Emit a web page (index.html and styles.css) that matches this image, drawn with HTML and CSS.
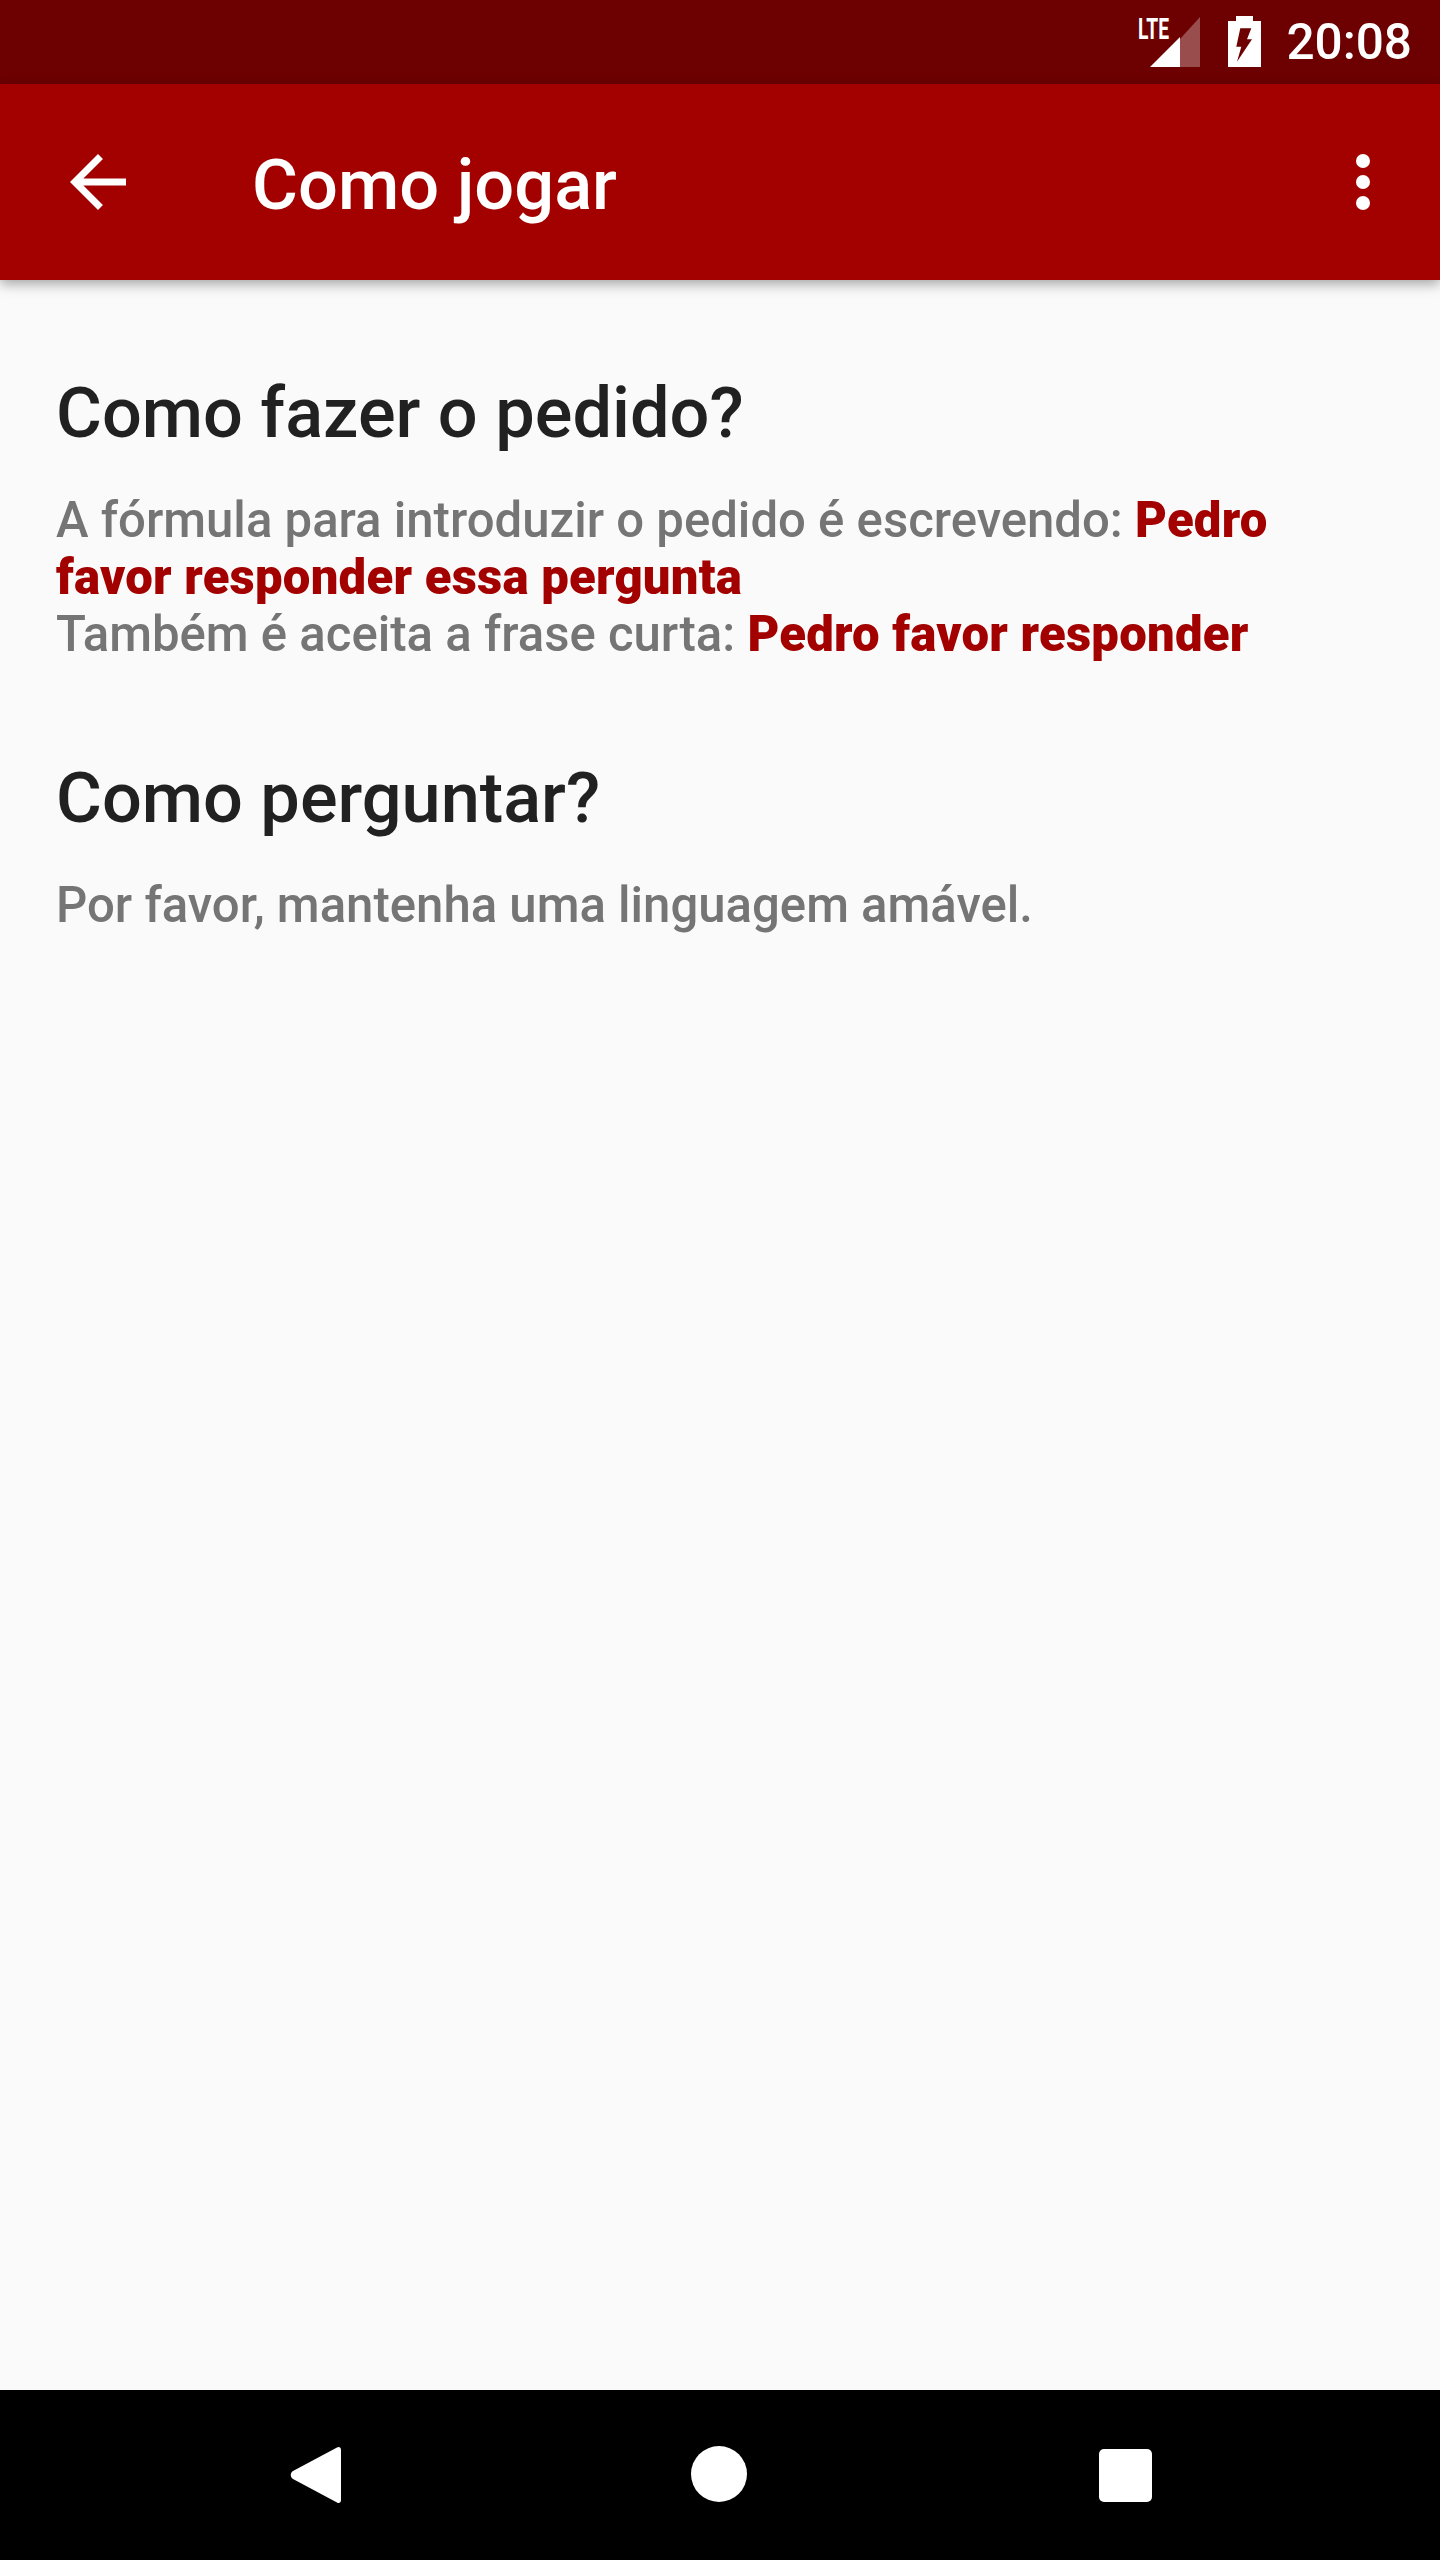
FILE: index.html
```html
<!DOCTYPE html>
<html lang="pt-BR">
<head>
  <meta charset="UTF-8">
  <title>Como jogar</title>
  <link rel="stylesheet" href="styles.css">
</head>
<body>
  <div class="status-bar">
    <svg class="signal" width="62" height="84" viewBox="0 0 62 84">
      <text x="0" y="39" textLength="31" lengthAdjust="spacingAndGlyphs" class="lte">LTE</text>
      <polygon points="62,17 62,67 42,67 42,39" fill="#fff" fill-opacity="0.3"/>
      <polygon points="42,37 42,67 12,67" fill="#fff"/>
    </svg>
    <svg class="battery" width="33" height="51" viewBox="0 0 33 51">
      <path fill="#fff" d="M8 0h17v5h8v46H0V5h8z"/>
      <path fill="#6d0000" d="M12.300 12.300h11L19 23.300h5L9 45.700l4.300-15h-5z"/>
    </svg>
    <span class="clock">20:08</span>
  </div>

  <div class="toolbar">
    <svg class="back" width="84" height="84" viewBox="0 0 24 24">
      <path fill="#fff" d="M20 11H7.830l5.590-5.590L12 4l-8 8 8 8 1.410-1.410L7.830 13H20v-2z"/>
    </svg>
    <h1 class="title">Como jogar</h1>
    <svg class="more" width="84" height="84" viewBox="0 0 84 84">
      <circle cx="42" cy="21" r="7" fill="#fff"/>
      <circle cx="42" cy="42" r="7" fill="#fff"/>
      <circle cx="42" cy="63" r="7" fill="#fff"/>
    </svg>
  </div>

  <div class="content">
    <h2 class="heading">Como fazer o pedido?</h2>
    <p class="text">A fórmula para introduzir o pedido é escrevendo: <b class="hl">Pedro favor responder essa pergunta</b><br>Também é aceita a frase curta: <b class="hl">Pedro favor responder</b></p>
    <h2 class="heading second">Como perguntar?</h2>
    <p class="text">Por favor, mantenha uma linguagem amável.</p>
  </div>

  <div class="nav-bar">
    <svg class="nav-back" width="52" height="58" viewBox="0 0 52 58">
      <path fill="#fff" d="M47 1.500c2-1.500 4 0 4 2.500v50c0 2.500-2 4-4 2.500L3 33c-3-2-3-6 0-8z"/>
    </svg>
    <svg class="nav-home" width="56" height="56" viewBox="0 0 56 56">
      <circle cx="28" cy="28" r="28" fill="#fff"/>
    </svg>
    <svg class="nav-recent" width="53" height="53" viewBox="0 0 53 53">
      <rect width="53" height="53" rx="5" fill="#fff"/>
    </svg>
  </div>
</body>
</html>
```

FILE: styles.css
```css
body {
  margin: 0;
  width: 1440px;
  height: 2560px;
  display: flex;
  flex-direction: column;
  background: #fafafa;
  font-family: Roboto, sans-serif;
  overflow: hidden;
}

.status-bar {
  height: 84px;
  flex: none;
  display: flex;
  align-items: center;
  padding-right: 28px;
  justify-content: flex-end;
  background: #6d0000;
  color: #fff;
}

.signal {
  margin-right: 28px;
}

.battery {
  margin-right: 25px;
  margin-top: -1px;
}

.lte {
  font-family: Roboto, sans-serif;
  font-size: 30px;
  font-weight: 700;
  fill: #fff;
}

.clock {
  font-size: 49.500px;
  font-weight: 500;
}

.toolbar {
  height: 196px;
  flex: none;
  display: flex;
  align-items: center;
  padding: 0 35px 0 56px;
  background: #a30000;
  box-shadow: 0 4px 12px rgba(0, 0, 0, 0.35);
  color: #fff;
  position: relative;
}

.title {
  flex: 1;
  margin: 0 0 0 112px;
  padding-top: 6px;
  font-size: 70.400px;
  font-weight: 500;
}

.content {
  flex: 1;
  padding: 91px 56px 0 56px;
}

.heading {
  margin: 0;
  font-size: 70.300px;
  line-height: 84px;
  font-weight: 500;
  color: #212121;
}

.heading.second {
  margin-top: 93px;
}

.text {
  margin: 37px 0 0;
  font-size: 49.100px;
  line-height: 57px;
  font-weight: 500;
  color: #757575;
}

.hl {
  font-weight: 900;
  letter-spacing: 0.220px;
  color: #a30000;
}

.nav-bar {
  height: 168px;
  flex: none;
  display: flex;
  align-items: center;
  justify-content: space-between;
  padding: 0 288px 2px 290px;
  background: #000;
}

.nav-back {
  margin-top: 2px;
}

.nav-home {
  margin-right: 3px;
}

.nav-recent {
  margin-top: 3px;
}
```
